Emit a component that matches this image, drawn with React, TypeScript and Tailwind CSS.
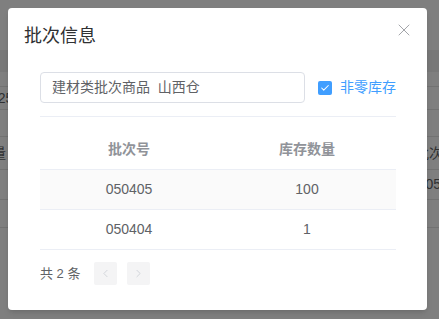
import { Check, X, ChevronLeft, ChevronRight } from "lucide-react";

const rows = [
  { batch: "050405", qty: "100" },
  { batch: "050404", qty: "1" },
];

const font = { fontFamily: '"Liberation Sans", "Noto Sans CJK SC", sans-serif' };

export default function App() {
  return (
    <div className="relative w-[439px] h-[319px] overflow-hidden bg-white text-[#606266]" style={font}>
      {/* page behind the dialog */}
      <div className="flex flex-col text-[14px]">
        <div className="h-[50px]" />
        <div className="h-[22px] bg-[#f0f0f0]" />
        <div className="h-[15px] border-b border-[#e4e4e4]" />
        <div className="h-[23px] border-b border-[#e4e4e4] flex items-center justify-between">
          <span className="-ml-[10px]">125</span>
        </div>
        <div className="h-[27px] border-b border-[#e4e4e4]" />
        <div className="h-[33px] border-b border-[#e4e4e4] flex items-center justify-between">
          <span className="-ml-[8px]">量</span>
          <span className="-mr-[4px]">批次</span>
        </div>
        <div className="h-[30px] border-b border-[#e4e4e4] flex items-center justify-end">
          <span className="-mr-[2px]">0505</span>
        </div>
        <div className="h-[28px] border-b border-[#e4e4e4]" />
      </div>

      {/* overlay */}
      <div className="absolute inset-0 bg-black/50" />

      {/* dialog */}
      <div className="absolute left-[8px] top-[8px] w-[419px] h-[302px] bg-white rounded-[4px] shadow-md">
        <div className="flex items-center justify-between pl-[16px] pr-[13px] pt-[16px]">
          <span className="text-[18px] leading-[24px] text-[#303133]">批次信息</span>
          <X size={20} strokeWidth={1} className="text-[#909399] -mt-[12px]" />
        </div>

        <div className="pl-[32px] pr-[31px] pt-[24px]">
          <div className="flex items-center">
            <div className="w-[265px] h-[31px] border border-[#dcdfe6] rounded-[4px] flex items-center px-[11px] text-[14px] text-[#606266] whitespace-pre">
              建材类批次商品  山西仓
            </div>
            <div className="ml-[13px] w-[14px] h-[14px] rounded-[2px] bg-[#409eff] flex items-center justify-center">
              <Check size={10} strokeWidth={2.5} className="text-white" />
            </div>
            <span className="ml-[8px] text-[14px] text-[#409eff]">非零库存</span>
          </div>

          <div className="mt-[13px] border-t border-[#ebeef5]" />

          <div className="mt-[12px] text-[14px]">
            <div className="grid grid-cols-2 h-[41px] border-b border-[#ebeef5] font-bold text-[#909399]">
              <div className="flex items-center justify-center">批次号</div>
              <div className="flex items-center justify-center">库存数量</div>
            </div>
            {rows.map((r, i) => (
              <div
                key={r.batch}
                className={`grid grid-cols-2 h-[40px] border-b border-[#ebeef5] ${i === 0 ? "bg-[#fafafa]" : ""}`}
              >
                <div className="flex items-center justify-center">{r.batch}</div>
                <div className="flex items-center justify-center">{r.qty}</div>
              </div>
            ))}
          </div>

          <div className="mt-[12px] flex items-center">
            <span className="text-[13px] whitespace-pre">共 2 条</span>
            <div className="ml-[14px] w-[23px] h-[23px] rounded-[2px] bg-[#f4f4f5] flex items-center justify-center">
              <ChevronLeft size={13} strokeWidth={1.2} className="text-[#c0c4cc]" />
            </div>
            <div className="ml-[10px] w-[23px] h-[23px] rounded-[2px] bg-[#f4f4f5] flex items-center justify-center">
              <ChevronRight size={13} strokeWidth={1.2} className="text-[#c0c4cc]" />
            </div>
          </div>
        </div>
      </div>
    </div>
  );
}
